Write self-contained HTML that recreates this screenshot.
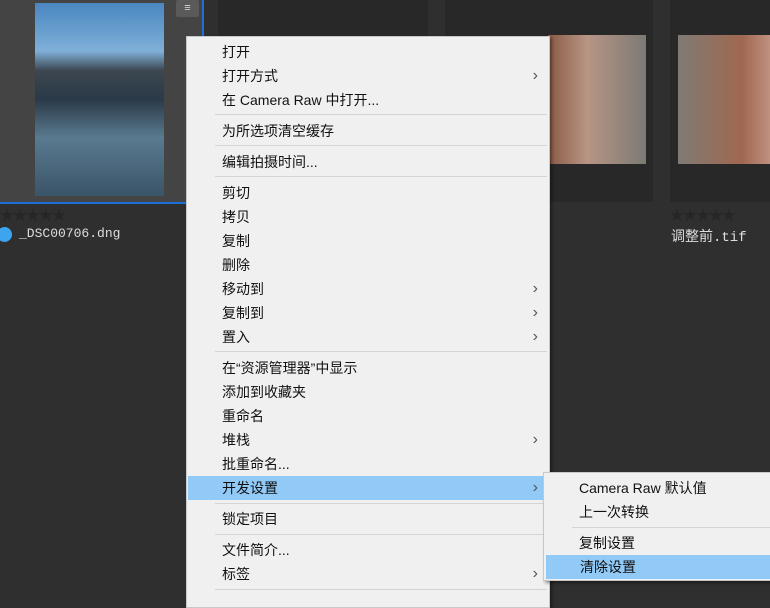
<!DOCTYPE html><html><head><meta charset="utf-8"><style>
body{margin:0;width:770px;height:595px;background:#2f2f2f;position:relative;overflow:hidden;font-family:"Liberation Sans","Noto Sans CJK SC",sans-serif}
.a{position:absolute}
.m{position:absolute;background:#f0f0f0;border:1px solid #c8c8c8;box-shadow:2px 2px 3px rgba(0,0,0,.4)}
.i{position:absolute;left:0;right:0;height:24px;line-height:24px;font-size:14px;color:#111;padding-left:35px;box-sizing:border-box}
.h{background:#91c9f7}
.s{position:absolute;height:1px;background:#d4d4d4}
.r{position:absolute;right:11px;top:0;color:#555;font-size:16px}
</style></head><body>
<div class="a" style="left:0;top:0;width:202px;height:202px;background:#444;border-right:2px solid #1e6fd9;border-bottom:2px solid #1e6fd9"></div>
<div class="a" style="left:35px;top:3px;width:129px;height:193px;background:linear-gradient(#4a86c0 0%,#7fb0d8 25%,#3c4650 35%,#2a3a48 50%,#5a7a90 70%,#3a5468 100%)"></div>
<div class="a" style="left:176px;top:0;width:23px;height:17px;background:#5a5a5a;border-radius:2px;color:#ddd;font-size:11px;text-align:center;line-height:17px">≡</div>
<div class="a" style="left:218px;top:0;width:210px;height:202px;background:#282828"></div>
<div class="a" style="left:445px;top:0;width:208px;height:202px;background:#282828"></div>
<div class="a" style="left:548px;top:35px;width:98px;height:129px;background:linear-gradient(90deg,#8a5a45,#b89585 40%,#7b7a74)"></div>
<div class="a" style="left:670px;top:0;width:100px;height:202px;background:#282828"></div>
<div class="a" style="left:678px;top:35px;width:92px;height:129px;background:linear-gradient(90deg,#807a74,#a06850 70%,#c09080)"></div>
<div class="a" style="left:0;top:205px;color:#262626;font-size:14px;letter-spacing:-1px">★★★★★</div>
<div class="a" style="left:670px;top:205px;color:#262626;font-size:14px;letter-spacing:-1px">★★★★★</div>
<div class="a" style="left:-3px;top:227px;width:15px;height:15px;border-radius:50%;background:#3da4ef"></div>
<div class="a" style="left:19px;top:226px;color:#ddd;font-size:13px;font-family:'Liberation Mono',monospace">_DSC00706.dng</div>
<div class="a" style="left:671px;top:226px;color:#ddd;font-size:14px;font-family:'Liberation Mono','Noto Sans CJK SC',monospace">调整前.tif</div>
<div class="m" style="left:186px;top:36px;width:362px;height:570px">
<div class="i" style="top:3px">打开</div>
<div class="i" style="top:27px">打开方式<span class="r">›</span></div>
<div class="i" style="top:51px">在 Camera Raw 中打开...</div>
<div class="s" style="left:28px;right:2px;top:77px"></div>
<div class="i" style="top:82px">为所选项清空缓存</div>
<div class="s" style="left:28px;right:2px;top:108px"></div>
<div class="i" style="top:113px">编辑拍摄时间...</div>
<div class="s" style="left:28px;right:2px;top:139px"></div>
<div class="i" style="top:144px">剪切</div>
<div class="i" style="top:168px">拷贝</div>
<div class="i" style="top:192px">复制</div>
<div class="i" style="top:216px">删除</div>
<div class="i" style="top:240px">移动到<span class="r">›</span></div>
<div class="i" style="top:264px">复制到<span class="r">›</span></div>
<div class="i" style="top:288px">置入<span class="r">›</span></div>
<div class="s" style="left:28px;right:2px;top:314px"></div>
<div class="i" style="top:319px">在“资源管理器”中显示</div>
<div class="i" style="top:343px">添加到收藏夹</div>
<div class="i" style="top:367px">重命名</div>
<div class="i" style="top:391px">堆栈<span class="r">›</span></div>
<div class="i" style="top:415px">批重命名...</div>
<div class="i h" style="top:439px;left:1px;right:1px;padding-left:34px">开发设置<span class="r" style="right:10px">›</span></div>
<div class="s" style="left:28px;right:2px;top:466px"></div>
<div class="i" style="top:470px">锁定项目</div>
<div class="s" style="left:28px;right:2px;top:497px"></div>
<div class="i" style="top:501px">文件简介...</div>
<div class="i" style="top:525px">标签<span class="r">›</span></div>
<div class="s" style="left:28px;right:2px;top:552px"></div>
</div>
<div class="m" style="left:543px;top:472px;width:240px;height:107px">
<div class="i" style="top:3px">Camera Raw 默认值</div>
<div class="i" style="top:27px">上一次转换</div>
<div class="s" style="left:28px;right:0;top:54px"></div>
<div class="i" style="top:58px">复制设置</div>
<div class="i h" style="top:82px;left:2px;padding-left:34px">清除设置</div>
</div>
</body></html>
